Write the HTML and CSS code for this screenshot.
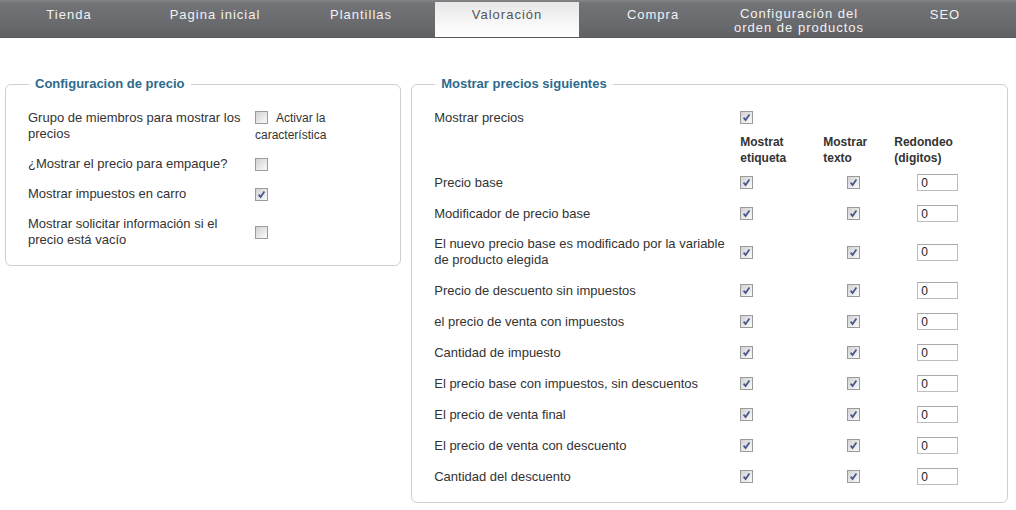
FILE: index.html
```html
<!DOCTYPE html>
<html lang="es">
<head>
<meta charset="utf-8">
<title>Valoración</title>
<link rel="stylesheet" href="styles.css">
</head>
<body>
<nav class="tabs">
  <a class="tab">Tienda</a>
  <a class="tab">Pagina inicial</a>
  <a class="tab">Plantillas</a>
  <a class="tab tab-active">Valoración</a>
  <a class="tab">Compra</a>
  <a class="tab tab-two">Configuración del<br>orden de productos</a>
  <a class="tab">SEO</a>
</nav>
<main class="content">
  <fieldset class="box box-left">
    <legend class="box-title">Configuracion de precio</legend>
    <div class="grid-left">
      <div class="cell">Grupo de miembros para mostrar los precios</div>
      <div class="cell cell-feature"><span class="cb"></span><span class="cb-label">Activar la</span><br>característica</div>

      <div class="cell">¿Mostrar el precio para empaque?</div>
      <div class="cell"><span class="cb"></span></div>

      <div class="cell">Mostrar impuestos en carro</div>
      <div class="cell"><span class="cb"><svg viewBox="0 0 11 11" width="11" height="11"><path d="M2.6 5.6 L4.6 8 L8.4 2.6" /></svg></span></div>

      <div class="cell">Mostrar solicitar información si el precio está vacío</div>
      <div class="cell"><span class="cb"></span></div>
    </div>
  </fieldset>

  <fieldset class="box box-right">
    <legend class="box-title">Mostrar precios siguientes</legend>
    <div class="grid-right">
      <div class="cell">Mostrar precios</div>
      <div class="cell"><span class="cb"><svg viewBox="0 0 11 11" width="11" height="11"><path d="M2.6 5.6 L4.6 8 L8.4 2.6" /></svg></span></div>
      <div class="cell"></div>
      <div class="cell"></div>

      <div class="cell head"></div>
      <div class="cell head">Mostrat<br>etiqueta</div>
      <div class="cell head">Mostrar<br>texto</div>
      <div class="cell head">Redondeo<br>(digitos)</div>

      <div class="cell">Precio base</div>
      <div class="cell"><span class="cb"><svg viewBox="0 0 11 11" width="11" height="11"><path d="M2.6 5.6 L4.6 8 L8.4 2.6" /></svg></span></div>
      <div class="cell c3"><span class="cb"><svg viewBox="0 0 11 11" width="11" height="11"><path d="M2.6 5.6 L4.6 8 L8.4 2.6" /></svg></span></div>
      <div class="cell c4"><input class="num" type="text" value="0"></div>

      <div class="cell">Modificador de precio base</div>
      <div class="cell"><span class="cb"><svg viewBox="0 0 11 11" width="11" height="11"><path d="M2.6 5.6 L4.6 8 L8.4 2.6" /></svg></span></div>
      <div class="cell c3"><span class="cb"><svg viewBox="0 0 11 11" width="11" height="11"><path d="M2.6 5.6 L4.6 8 L8.4 2.6" /></svg></span></div>
      <div class="cell c4"><input class="num" type="text" value="0"></div>

      <div class="cell">El nuevo precio base es modificado por la variable de producto elegida</div>
      <div class="cell"><span class="cb"><svg viewBox="0 0 11 11" width="11" height="11"><path d="M2.6 5.6 L4.6 8 L8.4 2.6" /></svg></span></div>
      <div class="cell c3"><span class="cb"><svg viewBox="0 0 11 11" width="11" height="11"><path d="M2.6 5.6 L4.6 8 L8.4 2.6" /></svg></span></div>
      <div class="cell c4"><input class="num" type="text" value="0"></div>

      <div class="cell">Precio de descuento sin impuestos</div>
      <div class="cell"><span class="cb"><svg viewBox="0 0 11 11" width="11" height="11"><path d="M2.6 5.6 L4.6 8 L8.4 2.6" /></svg></span></div>
      <div class="cell c3"><span class="cb"><svg viewBox="0 0 11 11" width="11" height="11"><path d="M2.6 5.6 L4.6 8 L8.4 2.6" /></svg></span></div>
      <div class="cell c4"><input class="num" type="text" value="0"></div>

      <div class="cell">el precio de venta con impuestos</div>
      <div class="cell"><span class="cb"><svg viewBox="0 0 11 11" width="11" height="11"><path d="M2.6 5.6 L4.6 8 L8.4 2.6" /></svg></span></div>
      <div class="cell c3"><span class="cb"><svg viewBox="0 0 11 11" width="11" height="11"><path d="M2.6 5.6 L4.6 8 L8.4 2.6" /></svg></span></div>
      <div class="cell c4"><input class="num" type="text" value="0"></div>

      <div class="cell">Cantidad de impuesto</div>
      <div class="cell"><span class="cb"><svg viewBox="0 0 11 11" width="11" height="11"><path d="M2.6 5.6 L4.6 8 L8.4 2.6" /></svg></span></div>
      <div class="cell c3"><span class="cb"><svg viewBox="0 0 11 11" width="11" height="11"><path d="M2.6 5.6 L4.6 8 L8.4 2.6" /></svg></span></div>
      <div class="cell c4"><input class="num" type="text" value="0"></div>

      <div class="cell">El precio base con impuestos, sin descuentos</div>
      <div class="cell"><span class="cb"><svg viewBox="0 0 11 11" width="11" height="11"><path d="M2.6 5.6 L4.6 8 L8.4 2.6" /></svg></span></div>
      <div class="cell c3"><span class="cb"><svg viewBox="0 0 11 11" width="11" height="11"><path d="M2.6 5.6 L4.6 8 L8.4 2.6" /></svg></span></div>
      <div class="cell c4"><input class="num" type="text" value="0"></div>

      <div class="cell">El precio de venta final</div>
      <div class="cell"><span class="cb"><svg viewBox="0 0 11 11" width="11" height="11"><path d="M2.6 5.6 L4.6 8 L8.4 2.6" /></svg></span></div>
      <div class="cell c3"><span class="cb"><svg viewBox="0 0 11 11" width="11" height="11"><path d="M2.6 5.6 L4.6 8 L8.4 2.6" /></svg></span></div>
      <div class="cell c4"><input class="num" type="text" value="0"></div>

      <div class="cell">El precio de venta con descuento</div>
      <div class="cell"><span class="cb"><svg viewBox="0 0 11 11" width="11" height="11"><path d="M2.6 5.6 L4.6 8 L8.4 2.6" /></svg></span></div>
      <div class="cell c3"><span class="cb"><svg viewBox="0 0 11 11" width="11" height="11"><path d="M2.6 5.6 L4.6 8 L8.4 2.6" /></svg></span></div>
      <div class="cell c4"><input class="num" type="text" value="0"></div>

      <div class="cell">Cantidad del descuento</div>
      <div class="cell"><span class="cb"><svg viewBox="0 0 11 11" width="11" height="11"><path d="M2.6 5.6 L4.6 8 L8.4 2.6" /></svg></span></div>
      <div class="cell c3"><span class="cb"><svg viewBox="0 0 11 11" width="11" height="11"><path d="M2.6 5.6 L4.6 8 L8.4 2.6" /></svg></span></div>
      <div class="cell c4"><input class="num" type="text" value="0"></div>
    </div>
  </fieldset>
</main>
</body>
</html>
```

FILE: styles.css
```css
* { box-sizing: border-box; }

body {
  margin: 0;
  background: #fff;
  font-family: "Liberation Sans", Arial, sans-serif;
  font-size: 13px;
  color: #333;
}

.tabs {
  display: flex;
  height: 38px;
  margin-left: -4px;
  background: linear-gradient(#85868a 0, #727377 3px, #6a6b6f 60%, #606164 100%);
  border-bottom: 1px solid #58595c;
  overflow: hidden;
}

.tab {
  flex: 0 0 146px;
  padding: 0 1px 8px;
  display: flex;
  align-items: center;
  justify-content: center;
  text-align: center;
  font-size: 13px;
  line-height: 14px;
  letter-spacing: 1px;
  color: #f2f2f2;
}

.tab-two { padding: 4px 1px 0; }

.tab-active {
  margin: 2px 1px 0;
  flex-basis: 144px;
  color: #555;
  padding-bottom: 10px;
  background: linear-gradient(#e6e6e6, #f7f7f7 60%, #ffffff);
}

.content {
  display: flex;
  align-items: flex-start;
  gap: 10px;
  padding: 38px 8px 0 5px;
}

.box {
  margin: 0;
  padding: 10px 22px 10px;
  border: 1px solid #cfcfcf;
  border-radius: 6px;
  min-width: 0;
}

.box-left { width: 397px; }
.box-right { width: 598px; }

.box-title {
  margin-left: 1px;
  padding: 0 6px;
  font-size: 13px;
  font-weight: bold;
  line-height: 16px;
  color: #2e6a8c;
}

.grid-left {
  display: grid;
  grid-template-columns: 227px 1fr;
  align-items: center;
  line-height: 16px;
}

.grid-right {
  display: grid;
  grid-template-columns: 306px 83px 71px 1fr;
  align-items: center;
  line-height: 16px;
}

.cell {
  padding: 7px 0;
  min-height: 30px;
  display: flex;
  align-items: center;
  flex-wrap: wrap;
}

.cell-feature {
  display: block;
  padding: 8px 0 5px;
  font-size: 12px;
  line-height: 17px;
}

.grid-right .cell { min-height: 31px; }

.cell.head {
  display: block;
  padding: 1px 0 0;
  min-height: 34px;
  font-size: 12px;
  font-weight: bold;
  color: #333;
}

.c3 { padding-left: 24px; }
.c4 { padding-left: 23px; }

.cb {
  display: inline-block;
  vertical-align: top;
  width: 13px;
  height: 13px;
  border: 1px solid #9b9b9b;
  background: linear-gradient(135deg, #d2d2d2, #eeeeee 70%, #fafafa);
}

.cell-feature .cb { margin-top: 1px; }

.cb svg { display: block; }

.cb path {
  fill: none;
  stroke: #45558a;
  stroke-width: 1.7;
}

.cb-label { margin-left: 8px; }

.num {
  width: 41px;
  height: 17px;
  margin: 0;
  padding: 0 3px;
  border: 1px solid #bdbdbd;
  border-top-color: #a9a9a9;
  font-family: "Liberation Sans", Arial, sans-serif;
  font-size: 12px;
  color: #222;
  background: #fff;
}
```
